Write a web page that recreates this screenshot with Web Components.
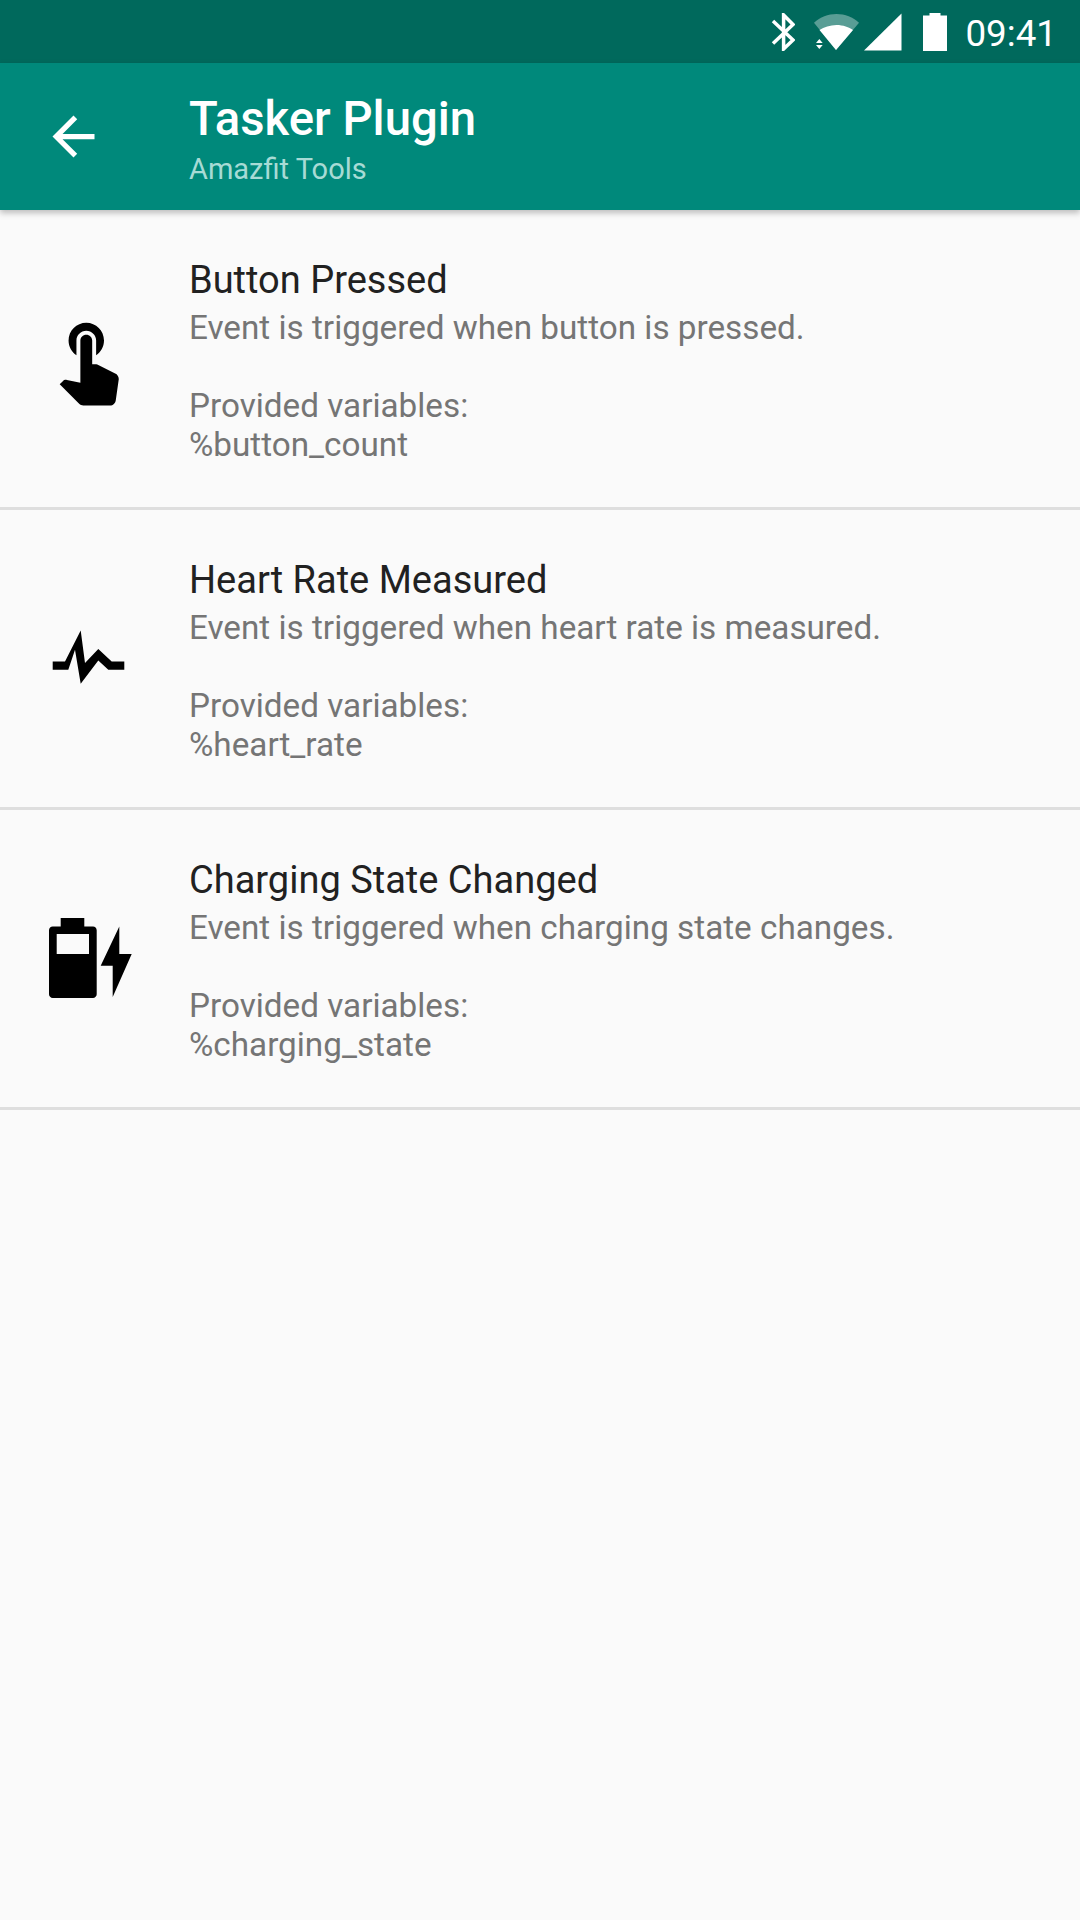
<!DOCTYPE html>
<html>
<head>
<meta charset="utf-8">
<title>Tasker Plugin</title>
<style>
    html, body { margin: 0; padding: 0; height: 100%; background: #fafafa; font-family: Roboto, "Noto Sans", sans-serif; }
    body { display: flex; flex-direction: column; height: 1920px; overflow: hidden; }
</style>
</head>
<body>
<status-bar time="09:41"></status-bar>
<app-toolbar title="Tasker Plugin" subtitle="Amazfit Tools"></app-toolbar>
<event-list>
    <event-row name="Button Pressed" desc="Event is triggered when button is pressed." variable="%button_count">
        <svg slot="icon" width="94.5" height="94.5" viewBox="0 0 24 24">
            <path fill="#000" d="M9 11.240V7.500C9 6.120 10.120 5 11.500 5S14 6.120 14 7.500v3.740c1.210-.810 2-2.180 2-3.740C16 5.010 13.990 3 11.500 3S7 5.010 7 7.500c0 1.560.790 2.930 2 3.740zm9.840 4.630l-4.540-2.260c-.170-.070-.350-.110-.540-.110H13v-6c0-.830-.670-1.500-1.500-1.500S10 6.670 10 7.500v10.740l-3.430-.720c-.080-.010-.150-.030-.240-.030-.310 0-.590.130-.790.330l-.790.800 4.940 4.940c.270.270.650.440 1.060.440h6.790c.750 0 1.330-.550 1.440-1.280l.750-5.270c.010-.070.020-.140.020-.200 0-.620-.380-1.160-.910-1.380z"/>
        </svg>
    </event-row>
    <event-row name="Heart Rate Measured" desc="Event is triggered when heart rate is measured." variable="%heart_rate">
        <svg slot="icon" width="94.5" height="94.5" viewBox="0 0 94.5 94.5">
            <path fill="#000" d="M11.700 50.450H24L39.700 19.450 44 52 57.300 38 70.700 50.450H83.300V58.750H67.300L57.300 49.450 39.700 72.750 34 38.750 27.300 58.750H11.700z"/>
        </svg>
    </event-row>
    <event-row name="Charging State Changed" desc="Event is triggered when charging state changes." variable="%charging_state">
        <svg slot="icon" width="94.5" height="94.5" viewBox="0 0 94.5 94.5">
            <path fill="#000" fill-rule="evenodd" d="M19.700 7H43.300V15.500H52C54 15.500 55.700 17.200 55.700 19.200V83.300C55.700 85.300 54 87 52 87H11.700C9.700 87 8 85.300 8 83.300V19.200C8 17.200 9.700 15.500 11.700 15.500H19.700zM15.700 23V43H48V23z"/>
            <path fill="#000" d="M78.300 15.500V43H90.700L71.700 86V54.750H59.700z"/>
        </svg>
    </event-row>
</event-list>

<script>
class StatusBar extends HTMLElement {
    constructor() {
        super();
        this.attachShadow({ mode: 'open' });
    }

    connectedCallback() {
        this.shadowRoot.innerHTML = `
            <style>
                :host {
                    display: flex;
                    flex: none;
                    height: 63px;
                    box-sizing: border-box;
                    align-items: center;
                    justify-content: flex-end;
                    padding-right: 23px;
                    background: #00695c;
                    color: #fff;
                    font: 400 36.750px Roboto, sans-serif;
                }
                svg { display: block; flex: none; fill: #fff; }
                .time { margin: 3px 0 0 18.500px; }
                .bt { margin-right: 19px; }
                .wifi { margin-right: 4px; }
                .signal { margin-right: 21px; }
            </style>
            <svg class="bt" width="24" height="38" viewBox="0 0 24 38">
                <path fill="none" stroke="#fff" stroke-width="3.500" d="M2 8L22 27 12.600 36V2L22 11.500 2 30.500"/>
            </svg>
            <svg class="wifi" width="46" height="38" viewBox="0 0 46 38">
                <path fill-opacity=".35" d="M22.500 1C31 1 39 4.200 45 9.700L22 37 0 9.700C6 4.200 14 1 22.500 1z"/>
                <path d="M22.500 12C29 12 35 14.200 39 17L22 37 5.500 17C10 14.200 16 12 22.500 12z"/>
                <path d="M2 30h6.700l-3.400-4zM2 32h6.700l-3.400 4z"/>
            </svg>
            <svg class="signal" width="38" height="38" viewBox="0 0 38 38">
                <path d="M0 37.500L37.500 0.500V37.500z"/>
            </svg>
            <svg class="battery" width="24" height="38" viewBox="0 0 24 38">
                <path d="M6.500 0H17.500V2.500H24V38H0V2.500H6.500z"/>
            </svg>
            <span class="time">${this.getAttribute('time')}</span>
        `;
    }
}

class AppToolbar extends HTMLElement {
    constructor() {
        super();
        this.attachShadow({ mode: 'open' });
    }

    connectedCallback() {
        this.shadowRoot.innerHTML = `
            <style>
                :host {
                    display: flex;
                    flex: none;
                    position: relative;
                    z-index: 2;
                    height: 147px;
                    align-items: flex-start;
                    background: #00897b;
                    box-shadow: 0 3px 6px rgba(0, 0, 0, .25);
                    color: #fff;
                }
                .back { flex: none; width: 189px; box-sizing: border-box; padding: 42px 0 0 42px; }
                .back svg { display: block; }
                .titles { display: flex; flex-direction: column; padding-top: 29px; }
                .title { font: 500 47.250px/54px Roboto, sans-serif; }
                .subtitle { font: 400 29px/36px Roboto, sans-serif; color: #a7dbd5; margin-top: 5px; }
            </style>
            <div class="back">
                <svg width="63" height="63" viewBox="0 0 24 24">
                    <path fill="#fff" d="M20 11H7.830l5.590-5.590L12 4l-8 8 8 8 1.410-1.410L7.830 13H20v-2z"/>
                </svg>
            </div>
            <div class="titles">
                <div class="title">${this.getAttribute('title')}</div>
                <div class="subtitle">${this.getAttribute('subtitle')}</div>
            </div>
        `;
    }
}

class EventList extends HTMLElement {
    constructor() {
        super();
        this.attachShadow({ mode: 'open' });
    }

    connectedCallback() {
        this.shadowRoot.innerHTML = `
            <style>
                :host { display: flex; flex-direction: column; flex: 1; background: #fafafa; }
            </style>
            <slot></slot>
        `;
    }
}

class EventRow extends HTMLElement {
    constructor() {
        super();
        this.attachShadow({ mode: 'open' });
    }

    connectedCallback() {
        this.shadowRoot.innerHTML = `
            <style>
                :host {
                    display: flex;
                    flex: none;
                    height: 300px;
                    box-sizing: border-box;
                    border-bottom: 3px solid #dedede;
                    align-items: flex-start;
                }
                .icon { flex: none; width: 189px; height: 100%; box-sizing: border-box; padding-left: 41px; display: flex; align-items: center; }
                ::slotted(svg) { display: block; }
                .text { display: flex; flex-direction: column; padding-top: 43px; }
                .name { font: 400 38px/55px Roboto, sans-serif; color: #212121; }
                .desc { font: 400 33.250px/39px Roboto, sans-serif; color: #757575; white-space: pre-line; }
            </style>
            <div class="icon"><slot name="icon"></slot></div>
            <div class="text">
                <div class="name">${this.getAttribute('name')}</div>
                <div class="desc">${this.getAttribute('desc')}

Provided variables:
${this.getAttribute('variable')}</div>
            </div>
        `;
    }
}

customElements.define('status-bar', StatusBar);
customElements.define('app-toolbar', AppToolbar);
customElements.define('event-list', EventList);
customElements.define('event-row', EventRow);
</script>
</body>
</html>
